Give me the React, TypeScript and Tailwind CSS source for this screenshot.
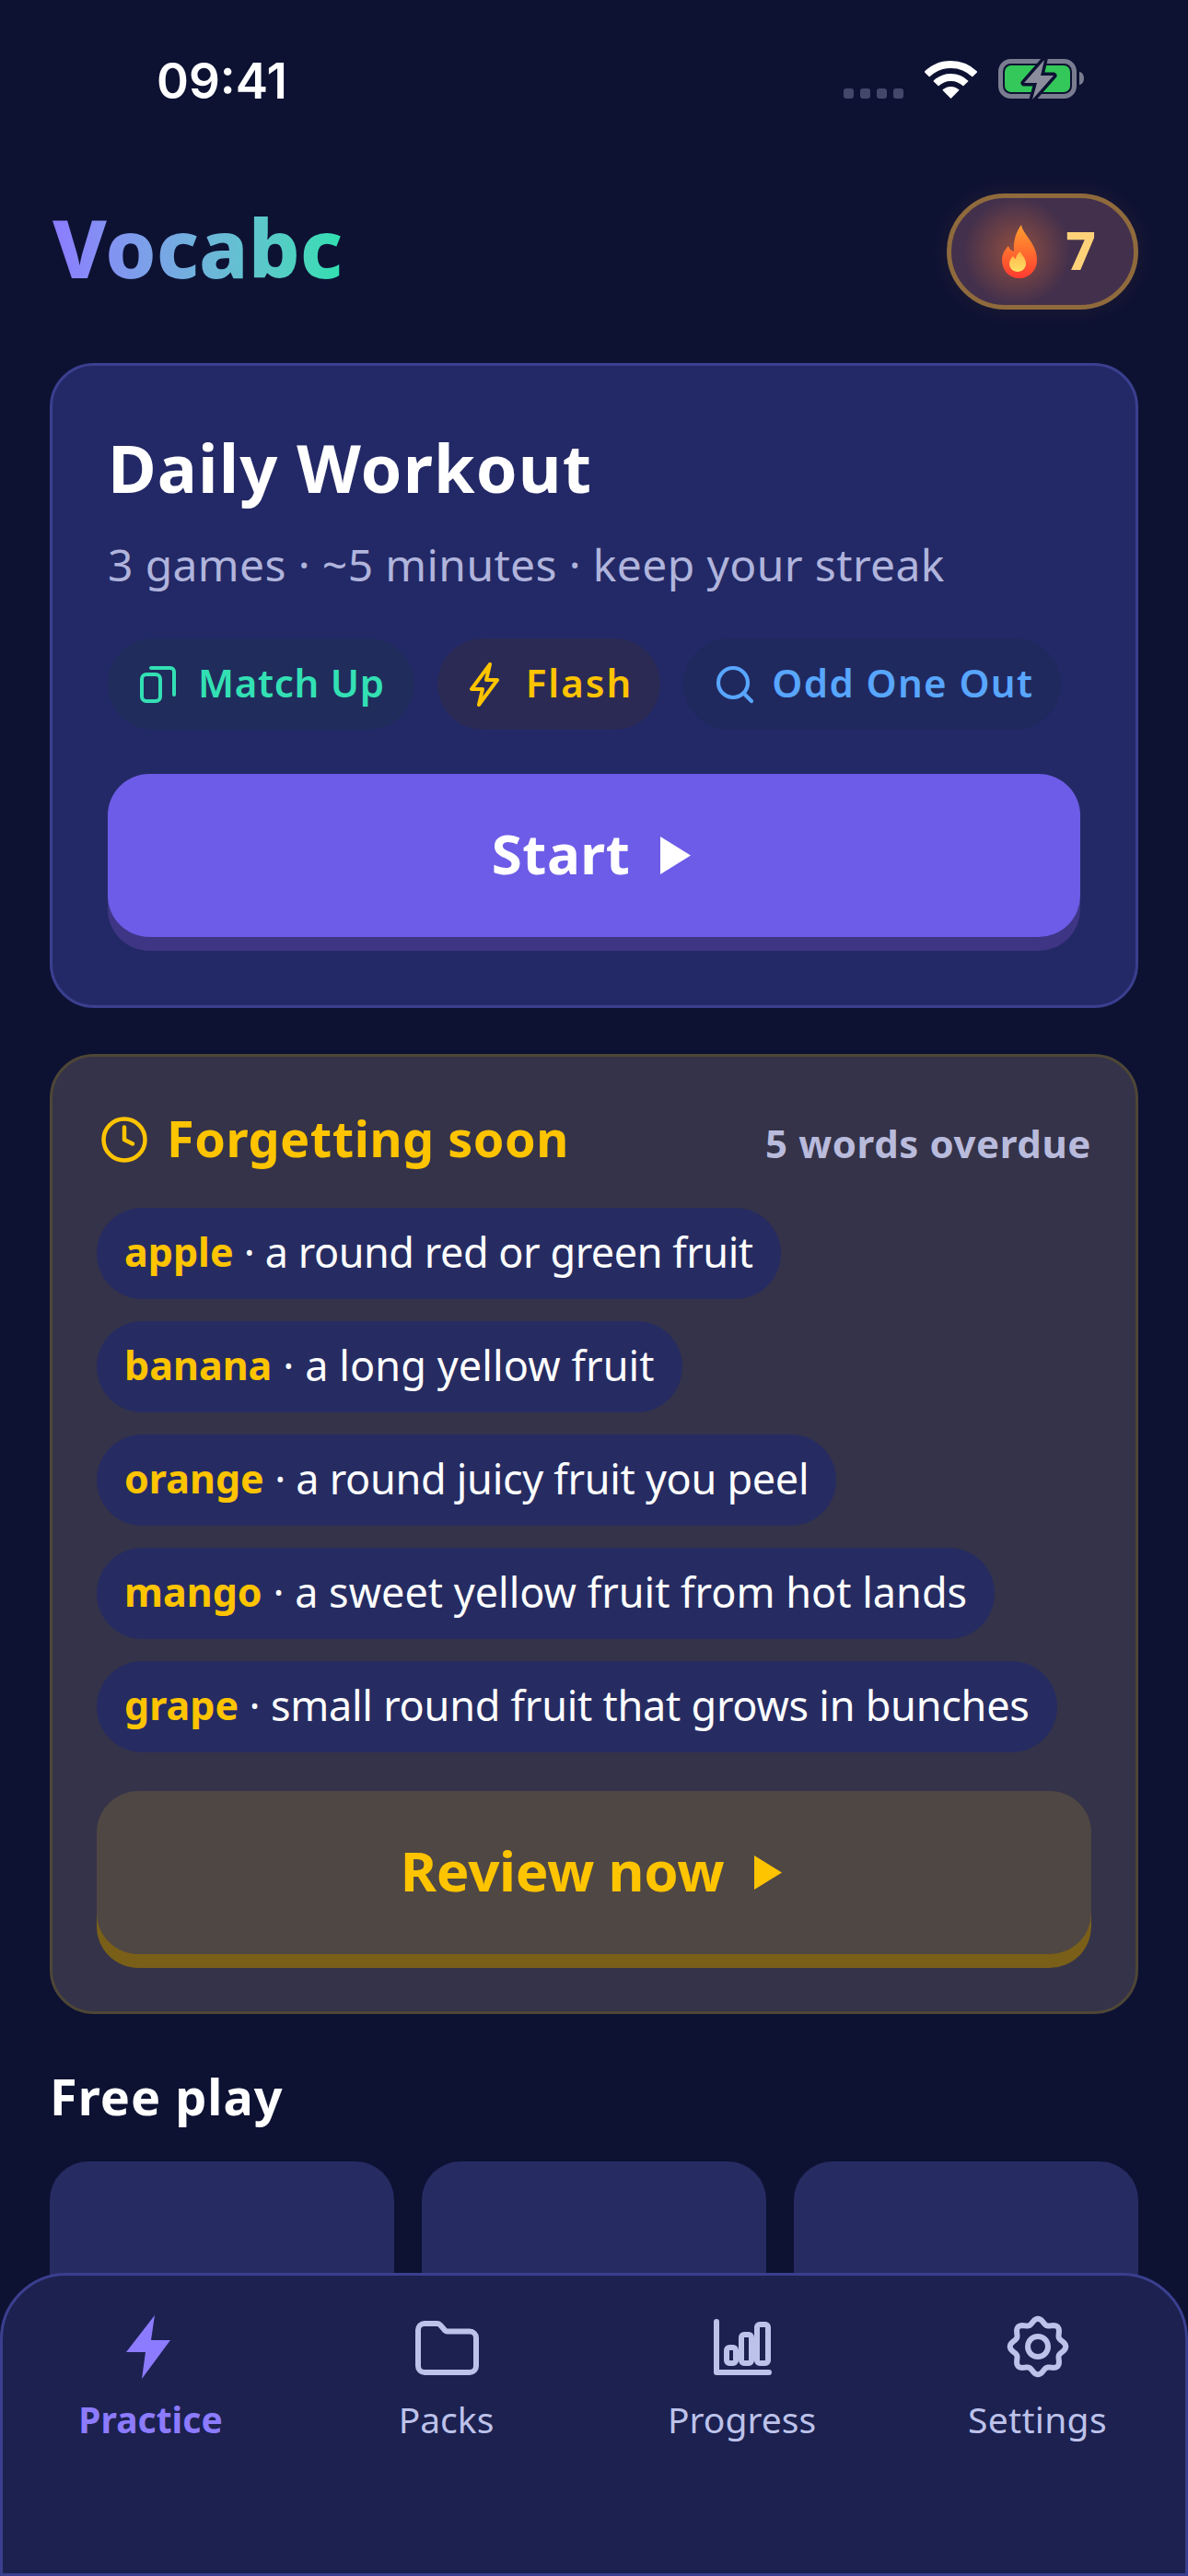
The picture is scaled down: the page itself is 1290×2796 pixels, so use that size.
import { Clock, Search } from 'lucide-react'

const words = [
  ['apple', 'a round red or green fruit', 'tracking-[-0.47px]'],
  ['banana', 'a long yellow fruit', 'tracking-[0.1px]'],
  ['orange', 'a round juicy fruit you peel', 'tracking-[-0.3px]'],
  ['mango', 'a sweet yellow fruit from hot lands', 'tracking-[0px]'],
  ['grape', 'small round fruit that grows in bunches', 'tracking-[-0.25px]'],
]

// wavy 8-lobed outline for the settings gear
const gearPath = Array.from({ length: 96 }, (_, i) => {
  const t = (i / 96) * Math.PI * 2
  const r = 27.5 + 2.8 * Math.cos(8 * t)
  return `${i === 0 ? 'M' : 'L'}${(36 + r * Math.sin(t)).toFixed(2)} ${(36 - r * Math.cos(t)).toFixed(2)}`
}).join(' ') + ' Z'

function StatusBar() {
  return (
    <div className="flex h-[210px] items-start justify-between pl-[170px] pr-[113px] pt-[58px]">
      <span className="font-['Inter',sans-serif] text-[53px] font-semibold leading-[60px] text-white">09:41</span>
      <div className="flex items-start pt-[7px]">
        <div className="mr-[23px] mt-[31px] flex gap-[7px]">
          {[0, 1, 2, 3].map((i) => (
            <div key={i} className="h-[11px] w-[11px] rounded-[3px] bg-[#43476a]" />
          ))}
        </div>
        <svg width="57" height="42" viewBox="0 0 57 42" fill="none">
          <path d="M2.3 15.8A37 37 0 0 1 54.7 15.8" stroke="#fff" strokeWidth="8" />
          <path d="M12.2 25.7A23 23 0 0 1 44.8 25.7" stroke="#fff" strokeWidth="8" />
          <path d="M28.5 42L19.3 32.8A13 13 0 0 1 37.7 32.8Z" fill="#fff" />
        </svg>
        <svg className="ml-[23px] -mt-[2px]" width="93" height="46" viewBox="0 0 93 46" fill="none">
          <rect x="2.5" y="3.5" width="80" height="38" rx="11" stroke="#7a7d90" strokeWidth="5" />
          <rect x="7" y="8" width="71" height="29" rx="7" fill="#34c759" />
          <path d="M88 15a5 7 0 0 1 0 14Z" fill="#7a7d90" />
          <path d="M50 2L28 27H42L37 45L60 19H46Z" fill="#8b8d9c" stroke="#0d1233" strokeWidth="7" strokeLinejoin="round" paintOrder="stroke" />
        </svg>
      </div>
    </div>
  )
}

function Flame() {
  return (
    <svg width="38" height="58" viewBox="0 0 38 58">
      <defs>
        <linearGradient id="flameOuter" x1="0" y1="0" x2="0" y2="1">
          <stop offset="0" stopColor="#ff9f2e" />
          <stop offset="1" stopColor="#ff3b30" />
        </linearGradient>
        <linearGradient id="flameInner" x1="0" y1="0" x2="0" y2="1">
          <stop offset="0" stopColor="#ffb347" />
          <stop offset="1" stopColor="#ffe066" />
        </linearGradient>
      </defs>
      <path d="M21 0C22 10 38 20 38 38C38 50 29 58 19 58C8 58 0 50 0 38C0 32 3 27 7 23C8 26 10 28 13 29C12 18 15 8 21 0Z" fill="url(#flameOuter)" />
      <path d="M20 29C21 33 26 36 26 42C26 47 22 51 17 51C12 51 8 47 8 42C8 39 10 36 12 34C13 36 14 37 15 37C15 34 17 31 20 29Z" fill="url(#flameInner)" />
    </svg>
  )
}

function PushButton({ label, className, triangle, textClass, small }: { label: string; className: string; triangle: string; textClass: string; small?: boolean }) {
  return (
    <div className={`flex h-[177px] items-center justify-center gap-[33px] rounded-[45px] pr-[6px] ${className}`}>
      <span className={`pb-[6px] text-[60px] font-bold leading-none ${textClass}`}>{label}</span>
      <svg width={small ? 30 : 33} height={small ? 37 : 41} viewBox="0 0 33 40" preserveAspectRatio="none">
        <path d="M0 0L33 20L0 40Z" fill={triangle} />
      </svg>
    </div>
  )
}

export default function App() {
  return (
    <div className="relative h-[2796px] w-[1290px] overflow-hidden bg-[#0d1233] font-['Noto_Sans',sans-serif] text-white">
      <StatusBar />

      <div className="px-[54px]">
        <header className="flex h-[126px] items-center justify-between">
          <h1 className="ml-[3px] bg-gradient-to-r from-[#8c7bff] to-[#2ee0b0] bg-clip-text pb-[10px] text-[88px] font-extrabold leading-none text-transparent">Vocabc</h1>
          <div className="flex h-[126px] w-[208px] items-center gap-[31px] rounded-full border-[5px] border-[#8f6a3c] bg-[#43304c] bg-[radial-gradient(circle_at_36%_50%,rgba(255,122,48,0.42),transparent_42%)] pl-[55px] shadow-[0_0_30px_rgba(255,140,60,0.08)]">
            <Flame />
            <span className="pb-[4px] text-[57px] font-extrabold leading-none text-[#ffd27a]">7</span>
          </div>
        </header>

        <section className="mt-[58px] rounded-[48px] border-[3px] border-[#3b3f8f] bg-[#232966] px-[60px] pb-[74px] pt-[60px]">
          <h2 className="text-[72px] font-bold leading-[100px] tracking-[1.1px]">Daily Workout</h2>
          <p className="mt-[23px] text-[48px] leading-[66px] tracking-[0.37px] text-[#b0b4dc]">3 games · ~5 minutes · keep your streak</p>
          <div className="mt-[47px] flex gap-[25px]">
            <div className="flex h-[99px] items-center gap-[23px] rounded-full bg-[#1f2c5c] pl-[33px] pr-[32px] text-[42px] font-semibold text-[#33e0b4]">
              <svg width="42" height="42" viewBox="0 0 42 42" fill="none" stroke="currentColor" strokeWidth="4" strokeLinecap="round">
                <rect x="4" y="10" width="20" height="29" rx="5" />
                <path d="M14 3H35a4 4 0 0 1 4 4V32" />
              </svg>
              <span className="pb-[4px] tracking-[0.7px]">Match Up</span>
            </div>
            <div className="flex h-[99px] items-center gap-[27px] rounded-full bg-[#2b2a55] pl-[33px] pr-[30px] text-[42px] font-semibold text-[#ffc400]">
              <svg width="36" height="50" viewBox="0 0 36 50" fill="none" stroke="currentColor" strokeWidth="4" strokeLinejoin="round">
                <path d="M24 3L4 30H16L12 47L32 20H20Z" />
              </svg>
              <span className="pb-[4px] tracking-[2px]">Flash</span>
            </div>
            <div className="flex h-[99px] items-center gap-[16px] rounded-full bg-[#20295e] pl-[32px] pr-[30px] text-[42px] font-semibold text-[#58a6ff]">
              <Search size={48} strokeWidth={2.1} />
              <span className="pb-[4px] tracking-[1.4px]">Odd One Out</span>
            </div>
          </div>
          <PushButton label="Start" textClass="tracking-[0.5px]" triangle="#ffffff" className="mt-[48px] bg-[#6c5ce7] text-white shadow-[0_15px_0_#3f3585]" />
        </section>

        <section className="mt-[50px] rounded-[48px] border-[3px] border-[#4e4636] bg-[#353349] px-[48px] pb-[62px] pt-[48px]">
          <div className="flex h-[84px] items-center justify-between">
            <div className="ml-[3px] flex items-center gap-[19px]">
              <Clock size={54} strokeWidth={2} className="text-[#ffc400]" />
              <span className="pb-[5px] text-[54px] font-bold leading-none tracking-[0.5px] text-[#ffc400]">Forgetting soon</span>
            </div>
            <span className="pt-[6px] text-[42px] font-bold tracking-[0.6px] text-[#b9bbdc]">5 words overdue</span>
          </div>
          <div className="mt-[32px] flex flex-col items-start gap-[24px]">
            {words.map(([word, meaning, spacing]) => (
              <div key={word} className="flex h-[99px] items-center rounded-full bg-[#262c62] px-[30px] pb-[4px] leading-none">
                <span className="text-[43px] font-bold text-[#ffc400]">{word}</span>
                <span className={`whitespace-pre text-[45px] text-white ${spacing}`}> · {meaning}</span>
              </div>
            ))}
          </div>
          <PushButton label="Review now" small textClass="tracking-[-0.3px]" triangle="#ffc400" className="mt-[42px] bg-[#4f4743] text-[#ffc400] shadow-[0_15px_0_#7a5f18]" />
        </section>

        <h3 className="mt-[53px] h-[72px] text-[54px] font-bold leading-[72px] tracking-[1px]">Free play</h3>
        <div className="mt-[35px] grid grid-cols-3 gap-[30px]">
          <div className="h-[300px] rounded-[42px] bg-[#262c62]" />
          <div className="h-[300px] rounded-[42px] bg-[#262c62]" />
          <div className="h-[300px] rounded-[42px] bg-[#262c62]" />
        </div>
      </div>

      <nav className="absolute inset-x-0 bottom-0 grid h-[329px] grid-cols-4 rounded-t-[72px] border-[3px] border-[#3b3f8f] bg-[#1c2150] pt-[41px]">
        <div className="flex flex-col items-center">
          <svg width="72" height="72" viewBox="0 0 72 72">
            <path d="M40 2L36 29H57L26 71L30 42H9Z" fill="#8c7bff" />
          </svg>
          <span className="mt-[16px] text-[39px] font-bold leading-[54px] text-[#8c7bff]">Practice</span>
        </div>
        <div className="flex flex-col items-center text-[#bdc2ea]">
          <svg width="72" height="72" viewBox="0 0 72 72" fill="none" stroke="currentColor" strokeWidth="6" strokeLinejoin="round">
            <path d="M12 11H25a5 5 0 0 1 4 1.5L33 17a5 5 0 0 0 4 2.5H61a7 7 0 0 1 7 7V57a7 7 0 0 1-7 7H12a7 7 0 0 1-7-7V18a7 7 0 0 1 7-7Z" />
          </svg>
          <span className="mt-[16px] text-[39px] leading-[54px]">Packs</span>
        </div>
        <div className="flex flex-col items-center text-[#bdc2ea]">
          <svg width="72" height="72" viewBox="0 0 72 72" fill="none" stroke="currentColor" strokeWidth="6" strokeLinecap="round" strokeLinejoin="round">
            <path d="M8 9V64H65" />
            <rect x="19" y="37" width="10" height="17" rx="3" />
            <rect x="35" y="23" width="11" height="31" rx="3" />
            <rect x="52" y="12" width="12" height="42" rx="3" />
          </svg>
          <span className="mt-[16px] text-[39px] leading-[54px]">Progress</span>
        </div>
        <div className="flex flex-col items-center text-[#bdc2ea]">
          <svg width="72" height="72" viewBox="0 0 72 72" fill="none" stroke="currentColor" strokeWidth="6" strokeLinejoin="round">
            <path d={gearPath} />
            <circle cx="36" cy="36" r="11" />
          </svg>
          <span className="mt-[16px] text-[39px] leading-[54px] tracking-[0.3px]">Settings</span>
        </div>
      </nav>
    </div>
  )
}
